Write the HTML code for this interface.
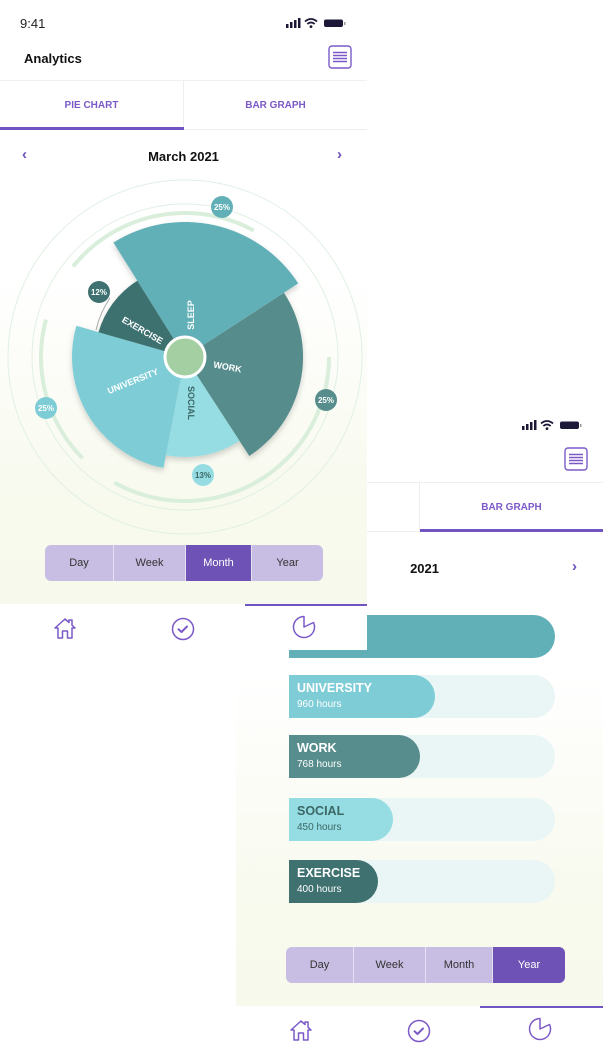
<!DOCTYPE html>
<html><head><meta charset="utf-8"><style>
*{margin:0;padding:0;box-sizing:border-box}
body{width:603px;height:1052px;background:#fff;position:relative;overflow:hidden;font-family:"Liberation Sans",sans-serif}
.scr{position:absolute;width:367px;height:650px;overflow:hidden;background:#fff}
.abs{position:absolute}
.grad{position:absolute;left:0;top:130px;width:367px;height:474px;background:linear-gradient(#fff 0%,#fff 30%,#f8faef 75%,#f7f9ec 100%)}
.tab{position:absolute;top:80px;height:50px;font-size:10px;font-weight:bold;color:#7b5ac8;display:flex;align-items:center;justify-content:center;border-top:1px solid #f0f0f0;border-bottom:1px solid #eee}
.seg{position:absolute;top:545px;height:36px;display:flex;border-radius:6px;overflow:hidden}
.seg div{background:#c8bde3;font-size:11px;color:#333;display:flex;align-items:center;justify-content:center;border-right:1px solid #e6e0f3}
.seg div:last-child{border-right:none}
.seg .on{background:#6e52b5;color:#fff}
.bar{position:absolute;left:53px;width:266px;height:43px;border-radius:0 22px 22px 0;background:#e9f6f5}
.bar .f{position:absolute;left:0;top:0;height:43px;border-radius:0 22px 22px 0;padding:6px 0 0 8px;color:#fff}
.bar b{display:block;font-size:12.5px}
.bar span{display:block;font-size:10px;margin-top:4px}
</style></head><body>

<!-- Screen 2 -->
<div class="scr" style="left:236px;top:402px;z-index:1">
  <div class="grad"></div>
  <div class="abs" style="left:23px;top:16px;font-size:13px;color:#222">9:41</div>
  <svg class="abs" style="left:286px;top:17px" width="62" height="12" viewBox="0 0 62 12">
    <rect x="0" y="7" width="2.5" height="4" fill="#1c1838"/><rect x="4" y="5" width="2.5" height="6" fill="#1c1838"/><rect x="8" y="3" width="2.5" height="8" fill="#1c1838"/><rect x="12" y="1" width="2.5" height="10" fill="#1c1838"/>
    <path d="M19 4.5 Q25 -0.5 31 4.5" stroke="#1c1838" stroke-width="1.8" fill="none"/><path d="M21.3 7 Q25 3.8 28.7 7" stroke="#1c1838" stroke-width="1.8" fill="none"/><circle cx="25" cy="9.6" r="1.4" fill="#1c1838"/>
    <rect x="38" y="2.5" width="19" height="7.5" rx="2" fill="#1c1838"/><rect x="58" y="5" width="1.5" height="3" fill="#999"/>
  </svg>
  <svg class="abs" style="left:328px;top:45px" width="24" height="24" viewBox="0 0 24 24"><rect x="1" y="1" width="22" height="22" rx="3" fill="none" stroke="#7b5ac8" stroke-width="1.4"/><path d="M5 7.5H19M5 10.5H19M5 13.5H19M5 16.5H19" stroke="#7b5ac8" stroke-width="1.4"/></svg>
  <div class="tab" style="left:0;width:184px;border-right:1px solid #eee">PIE CHART</div>
  <div class="tab" style="left:184px;width:183px">BAR GRAPH</div>
  <div class="abs" style="left:184px;top:127px;width:183px;height:3px;background:#7055c2"></div>
  <div class="abs" style="left:172px;top:157px;width:31px;height:20px;overflow:hidden"><span style="position:absolute;right:0;top:2px;white-space:nowrap;font-size:13px;font-weight:bold;color:#111">March 2021</span></div>
  <div class="abs" style="left:336px;top:156px;font-size:15px;font-weight:bold;color:#6b4fc0">›</div>
  <div class="bar" style="top:213px;background:#62b0b7"></div>
  <div class="bar" style="top:273px"><div class="f" style="width:146px;background:#7ecdd6"><b>UNIVERSITY</b><span>960 hours</span></div></div>
  <div class="bar" style="top:333px"><div class="f" style="width:131px;background:#578d8c"><b>WORK</b><span>768 hours</span></div></div>
  <div class="bar" style="top:396px"><div class="f" style="width:104px;background:#95dce3;color:#3b6765"><b>SOCIAL</b><span>450 hours</span></div></div>
  <div class="bar" style="top:458px"><div class="f" style="width:89px;background:#3e7170"><b>EXERCISE</b><span>400 hours</span></div></div>
  <div class="seg" style="left:50px;width:279px"><div style="width:68px">Day</div><div style="width:72px">Week</div><div style="width:67px">Month</div><div class="on" style="width:72px">Year</div></div>
  <div class="abs" style="left:0;top:604px;width:367px;height:46px;background:#fff"></div>
  <div class="abs" style="left:244px;top:604px;width:123px;height:2px;background:#7055c2"></div>
  <svg class="abs" style="left:52px;top:615px" width="26" height="26" viewBox="0 0 26 26"><path d="M3 13 L13 4 L17 7.5 V5 H20 V10.2 L23 13 H20 V23 H15.5 V16 H10.5 V23 H6 V13 Z" fill="none" stroke="#7b5ac8" stroke-width="1.5" stroke-linejoin="round"/></svg>
  <svg class="abs" style="left:171px;top:617px" width="24" height="24" viewBox="0 0 24 24"><circle cx="12" cy="12" r="10.5" fill="none" stroke="#7b5ac8" stroke-width="1.5"/><path d="M7.5 12.3 L10.5 15 L16 9.5" fill="none" stroke="#7b5ac8" stroke-width="2" stroke-linecap="round" stroke-linejoin="round"/></svg>
  <svg class="abs" style="left:291px;top:614px" width="26" height="26" viewBox="0 0 26 26"><path d="M13 2.5 A10.5 10.5 0 1 0 22.5 8.5 L13 13 Z" fill="none" stroke="#7b5ac8" stroke-width="1.5" stroke-linejoin="round"/></svg>
</div>

<!-- Screen 1 -->
<div class="scr" style="left:0;top:0;z-index:2">
  <div class="grad"></div>
  <div class="abs" style="left:20px;top:16px;font-size:13px;color:#222">9:41</div>
  <svg class="abs" style="left:286px;top:17px" width="62" height="12" viewBox="0 0 62 12">
    <rect x="0" y="7" width="2.5" height="4" fill="#1c1838"/><rect x="4" y="5" width="2.5" height="6" fill="#1c1838"/><rect x="8" y="3" width="2.5" height="8" fill="#1c1838"/><rect x="12" y="1" width="2.5" height="10" fill="#1c1838"/>
    <path d="M19 4.5 Q25 -0.5 31 4.5" stroke="#1c1838" stroke-width="1.8" fill="none"/><path d="M21.3 7 Q25 3.8 28.7 7" stroke="#1c1838" stroke-width="1.8" fill="none"/><circle cx="25" cy="9.6" r="1.4" fill="#1c1838"/>
    <rect x="38" y="2.5" width="19" height="7.5" rx="2" fill="#1c1838"/><rect x="58" y="5" width="1.5" height="3" fill="#999"/>
  </svg>
  <div class="abs" style="left:24px;top:51px;font-size:13px;font-weight:bold;color:#111">Analytics</div>
  <svg class="abs" style="left:328px;top:45px" width="24" height="24" viewBox="0 0 24 24"><rect x="1" y="1" width="22" height="22" rx="3" fill="none" stroke="#7b5ac8" stroke-width="1.4"/><path d="M5 7.5H19M5 10.5H19M5 13.5H19M5 16.5H19" stroke="#7b5ac8" stroke-width="1.4"/></svg>
  <div class="tab" style="left:0;width:184px;border-right:1px solid #eee">PIE CHART</div>
  <div class="tab" style="left:184px;width:183px">BAR GRAPH</div>
  <div class="abs" style="left:0;top:127px;width:184px;height:3px;background:#7055c2"></div>
  <div class="abs" style="left:0;top:149px;width:367px;text-align:center;font-size:13px;font-weight:bold;color:#111">March 2021</div>
  <div class="abs" style="left:22px;top:146px;font-size:15px;font-weight:bold;color:#6b4fc0">‹</div>
  <div class="abs" style="left:337px;top:146px;font-size:15px;font-weight:bold;color:#6b4fc0">›</div>

  <svg class="abs" style="left:0;top:0" width="367" height="604" viewBox="0 0 367 604">
    <defs><filter id="sh" x="-20%" y="-20%" width="140%" height="140%"><feDropShadow dx="0" dy="3" stdDeviation="3" flood-color="#000" flood-opacity="0.18"/></filter></defs>
    <circle cx="185" cy="357" r="177" fill="none" stroke="#e1f0e4" stroke-width="1"/>
    <circle cx="185" cy="357" r="153" fill="none" stroke="#e1f0e4" stroke-width="1"/>
    <circle cx="185" cy="357" r="144" fill="none" stroke="#d9eedb" stroke-width="4" stroke-dasharray="300 40 150 60 200 160"/>
    <path d="M96 330 A94 94 0 0 1 110 298" fill="none" stroke="#aaa" stroke-width="1"/>
    <g filter="url(#sh)">
      <path d="M185 357 L113.4 242.5 A135 135 0 0 1 298.2 283.4 Z" fill="#62b0b7"/>
      <path d="M185 357 L284 292.7 A118 118 0 0 1 249.3 456 Z" fill="#578d8c"/>
      <path d="M185 357 L239.5 440.9 A100 100 0 0 1 165.9 455.2 Z" fill="#95dce3"/>
      <path d="M185 357 L163.4 467.9 A113 113 0 0 1 76.4 325.8 Z" fill="#7ecdd6"/>
      <path d="M185 357 L98.5 332.2 A90 90 0 0 1 137.3 280.7 Z" fill="#3e7170"/>
    </g>
    <circle cx="185" cy="357" r="20" fill="#a3cfa3" stroke="#fff" stroke-width="3"/>
    <g font-family="Liberation Sans, sans-serif" font-weight="bold" font-size="9" fill="#fff" text-anchor="middle">
      <text transform="translate(194,315) rotate(-90)">SLEEP</text>
      <text transform="translate(141,333) rotate(30)">EXERCISE</text>
      <text transform="translate(227,370) rotate(10)">WORK</text>
      <text transform="translate(134,384) rotate(-22)">UNIVERSITY</text>
      <text transform="translate(188,403) rotate(90)" fill="#3b6765">SOCIAL</text>
    </g>
    <g font-family="Liberation Sans, sans-serif" font-weight="bold" font-size="8" text-anchor="middle">
      <circle cx="222" cy="207" r="11" fill="#62b0b7"/><text x="222" y="210" fill="#fff">25%</text>
      <circle cx="99" cy="292" r="11" fill="#3e7170"/><text x="99" y="295" fill="#fff">12%</text>
      <circle cx="326" cy="400" r="11" fill="#578d8c"/><text x="326" y="403" fill="#fff">25%</text>
      <circle cx="203" cy="475" r="11" fill="#95dce3"/><text x="203" y="478" fill="#3b6765">13%</text>
      <circle cx="46" cy="408" r="11" fill="#7ecdd6"/><text x="46" y="411" fill="#fff">25%</text>
    </g>
  </svg>

  <div class="seg" style="left:45px;width:278px"><div style="width:69px">Day</div><div style="width:72px">Week</div><div class="on" style="width:66px">Month</div><div style="width:71px">Year</div></div>
  <div class="abs" style="left:0;top:604px;width:367px;height:46px;background:#fff"></div>
  <div class="abs" style="left:245px;top:604px;width:122px;height:2px;background:#7055c2"></div>
  <svg class="abs" style="left:52px;top:615px" width="26" height="26" viewBox="0 0 26 26"><path d="M3 13 L13 4 L17 7.5 V5 H20 V10.2 L23 13 H20 V23 H15.5 V16 H10.5 V23 H6 V13 Z" fill="none" stroke="#7b5ac8" stroke-width="1.5" stroke-linejoin="round"/></svg>
  <svg class="abs" style="left:171px;top:617px" width="24" height="24" viewBox="0 0 24 24"><circle cx="12" cy="12" r="10.5" fill="none" stroke="#7b5ac8" stroke-width="1.5"/><path d="M7.5 12.3 L10.5 15 L16 9.5" fill="none" stroke="#7b5ac8" stroke-width="2" stroke-linecap="round" stroke-linejoin="round"/></svg>
  <svg class="abs" style="left:291px;top:614px" width="26" height="26" viewBox="0 0 26 26"><path d="M13 2.5 A10.5 10.5 0 1 0 22.5 8.5 L13 13 Z" fill="none" stroke="#7b5ac8" stroke-width="1.5" stroke-linejoin="round"/></svg>
</div>
</body></html>
